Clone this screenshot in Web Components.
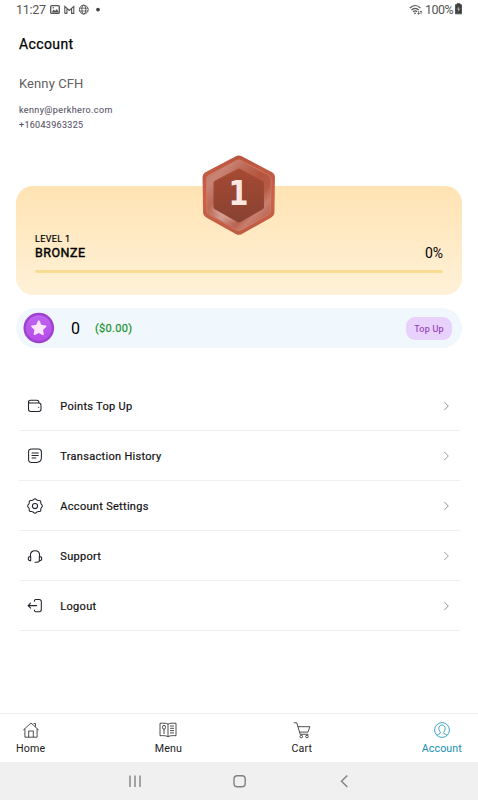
<!DOCTYPE html>
<html lang="en">
<head>
<meta charset="utf-8">
<title>Account</title>
<style>
html, body { margin: 0; height: 100%; background: #fff; }
body { font-family: Roboto, "Liberation Sans", sans-serif; color: #000; overflow: hidden; }
</style>
</head>
<body>
<account-screen></account-screen>
<script>
const define = (name, html) => customElements.define(name, class extends HTMLElement {
  constructor() {
    super();
    const t = document.createElement('template');
    t.innerHTML = html;
    this.attachShadow({ mode: 'open' }).append(t.content.cloneNode(true));
  }
});

define('status-bar', `<style>
:host { display: flex; height: 20px; align-items: center; padding: 0 16px; box-sizing: border-box; color: #555; font-size: 12.5px; line-height: 20px; }
svg { display: block; fill: none; stroke: currentColor; }
.gap { flex: 1; }
</style>
<span style="width:34px;letter-spacing:-.3px">11:27</span>
<svg width="56" height="12" viewBox="0 0 56 12" stroke-width="1">
<rect x=".7" y="1.6" width="8.6" height="7.8" rx="1" stroke-width="1.3"/><path d="M1.5 8.4 3.8 5.5 5.2 7 6.7 5 9 8.4Z" fill="currentColor" stroke="none"/><circle cx="3.3" cy="3.8" r=".8" fill="currentColor" stroke="none"/>
<path d="M14.8 9.4V2.4l4.5 4 4.5-4v7h-2.2V4.8M17 9.4V4.8M14.8 9.4H17" stroke-width="1.1"/>
<circle cx="33.8" cy="5.6" r="4.4"/><ellipse cx="33.8" cy="5.6" rx="2" ry="4.4"/><path d="M29.6 4.2h8.4M29.6 7h8.4" stroke-width=".8"/>
<circle cx="48" cy="5.6" r="1.9" fill="#444" stroke="none"/></svg>
<span class="gap"></span>
<svg width="16" height="12" viewBox="0 0 16 12" stroke-width="1.2"><path d="M.8 4.2C4 .6 8.6.6 11.4 4.2M2.5 6c2.4-2.3 5-2.3 7.2 0M4.1 7.7c1.4-1.2 2.7-1.2 4 0"/><circle cx="6" cy="9.3" r=".9" fill="currentColor" stroke="none"/><path d="M9.6 7v3.2M8.6 9l1 1.3 1-1.3M12 10.2V7M11 8.2l1-1.3 1 1.3" stroke-width=".8"/></svg>
<span style="width:30px;letter-spacing:-.5px">100%</span>
<svg width="7" height="12" viewBox="0 0 7 12" stroke="none" style="margin-top:-2px"><path d="M2 .7h3v1h1.5v9.1h-6V1.7H2Z" fill="#3c3c3c"/><path d="M4.2 3 1.4 6.6h1.7L2.7 9.4l2.8-3.9H3.8Z" fill="#fff"/></svg>`);

define('profile-header', `<style>
:host { display: block; padding: 14px 19px 0; height: 152px; }
h1, h2, p { margin: 0; }
h1 { font-size: 14px; line-height: 20px; font-weight: 400; -webkit-text-stroke: .25px; letter-spacing: .4px; }
h2 { font-size: 13px; line-height: 18px; font-weight: 400; color: #606060; margin-top: 21px; letter-spacing: .1px; }
p { font-size: 9px; line-height: 15px; color: #5a5568; font-weight: 400; -webkit-text-stroke: .1px; }
</style><h1>Account</h1><h2><slot name="name"></slot></h2><p style="margin-top:10px;letter-spacing:.38px"><slot name="email"></slot></p><p style="letter-spacing:.3px"><slot name="phone"></slot></p>`);

define('level-badge', `<style>:host { display: block; width: 76px; height: 82px; } svg { display: block; }</style>
<svg width="76" height="82" viewBox="0 0 76 82">
<defs><linearGradient id="o" gradientUnits="userSpaceOnUse" x1="0" y1="0" x2="0" y2="82"><stop stop-color="#b95640"/><stop offset=".55" stop-color="#cc6148"/><stop offset="1" stop-color="#bd5b43"/></linearGradient>
<linearGradient id="r" gradientUnits="userSpaceOnUse" x1="8" y1="14" x2="68" y2="70"><stop stop-color="#c27a6a"/><stop offset=".14" stop-color="#c98475"/><stop offset=".3" stop-color="#bd6b58"/><stop offset=".5" stop-color="#b4553e"/><stop offset=".68" stop-color="#b55a45"/><stop offset=".8" stop-color="#c87e6f"/><stop offset="1" stop-color="#b45a45"/></linearGradient>
<radialGradient id="g" gradientUnits="userSpaceOnUse" cx="20" cy="64" r="17"><stop stop-color="#d5a197"/><stop offset="1" stop-color="#d5a197" stop-opacity="0"/></radialGradient>
<linearGradient id="c" gradientUnits="userSpaceOnUse" x1="0" y1="15" x2="0" y2="68"><stop stop-color="#ad4c34"/><stop offset="1" stop-color="#8b4234"/></linearGradient>
<pattern id="p" width="3" height="3" patternUnits="userSpaceOnUse"><path d="M0 0 3 3M3 0 0 3" stroke="#783a26" stroke-width=".5" opacity=".45"/></pattern></defs>
<g stroke-linejoin="round"><path d="M37.8 7.8 67.7 23.5 67.2 58 37.8 74.5 8.3 58 7.8 23.5Z" fill="url(#o)" stroke="url(#o)" stroke-width="12.5"/>
<path d="M37.8 11 65 25.5 64.5 56.5 37.8 71.5 11 56.5 10.5 25.5Z" fill="#d37a65" stroke="#d37a65" stroke-width="11"/>
<path d="M37.8 11 65 25.5 64.5 56.5 37.8 71.5 11 56.5 10.5 25.5Z" fill="url(#r)" stroke="url(#r)" stroke-width="9.5"/>
<path d="M37.8 11 65 25.5 64.5 56.5 37.8 71.5 11 56.5 10.5 25.5Z" fill="url(#g)" stroke="url(#g)" stroke-width="9"/>
<path d="M38 17 60.5 29 60.5 53 38 66 15 53 15 29Z" fill="url(#c)" stroke="url(#c)" stroke-width="5"/>
<path d="M38 16 62 28.5 62 53.5 38 67.5 13.5 53.5 13.5 28.5Z" fill="url(#p)"/></g>
<text x="37.5" y="50.5" text-anchor="middle" font-family="DejaVu Sans, sans-serif" font-weight="700" font-size="34" fill="#ffe8e2" textLength="20" lengthAdjust="spacingAndGlyphs">1</text></svg>`);

define('level-card', `<style>
:host { display: grid; grid-template-columns: 1fr auto; grid-template-rows: 50px 12px 14px auto; box-sizing: border-box; height: 109px; margin: 0 16px; padding: 0 19px; background: linear-gradient(#ffe3b3, #fff1d8); border-radius: 17px; position: relative; }
level-badge { position: absolute; left: 185px; top: -32px; }
.level { grid-area: 2/1; font-size: 9px; line-height: 12px; -webkit-text-stroke: .2px; letter-spacing: .35px; margin-top: -3px; }
.tier { grid-area: 3/1; font-size: 12.5px; line-height: 14px; font-weight: 400; -webkit-text-stroke: .4px; letter-spacing: .5px; margin-top: -2px; }
.pct { grid-area: 3/2; font-size: 14px; line-height: 16px; margin-top: -3px; font-weight: 400; }
.bar { grid-area: 4/1/5/3; height: 3px; margin-top: 8px; border-radius: 2px; background: #fadb92; }
</style><level-badge></level-badge><span class="level"><slot name="level"></slot></span><span class="tier"><slot name="tier"></slot></span><span class="pct"><slot name="pct"></slot></span><div class="bar"></div>`);

define('points-row', `<style>
:host { display: flex; align-items: center; height: 40px; margin: 13px 16px 0; padding: 0 10px 0 7px; background: #f0f8fd; border-radius: 20px; }
svg { display: block; }
.pts { width: 24px; margin-left: 16px; font-size: 16px; line-height: 20px; padding-top: 1px; }
.cash { color: #15902a; font-size: 11px; -webkit-text-stroke: .2px; letter-spacing: .3px; flex: 1; padding-top: 1px; }
.btn { width: 46px; height: 23px; border-radius: 9px; background: #e8d1fb; color: #9139b8; font-size: 9px; letter-spacing: .25px; -webkit-text-stroke: .1px; line-height: 24px; text-align: center; }
</style><svg width="32" height="32" viewBox="0 0 32 32"><defs><linearGradient id="m" x1="0" y1="0" x2="0" y2="1"><stop stop-color="#bd65f0"/><stop offset="1" stop-color="#b64bea"/></linearGradient></defs><circle cx="15.8" cy="16" r="15.3" fill="#9f42cf"/><circle cx="15.8" cy="16" r="12.8" fill="url(#m)"/><path d="m15.8 9.2 2.1 4.3 4.8.7-3.5 3.4.8 4.8-4.2-2.3-4.3 2.3.8-4.8-3.4-3.4 4.7-.7Z" fill="#fce5fc" stroke="#fce5fc" stroke-width="1.6" stroke-linejoin="round"/></svg>
<span class="pts"><slot name="points"></slot></span><span class="cash"><slot name="cash"></slot></span><span class="btn">Top Up</span>`);

define('menu-row', `<style>
:host { display: flex; align-items: center; height: 50px; margin: 0 18px 0 19px; padding: 0 10px 0 8px; border-bottom: 1px solid #efefef; box-sizing: border-box; }
::slotted(svg) { display: block; width: 16px; height: 16px; fill: none; stroke: #20232b; stroke-width: 1.05; stroke-linecap: round; stroke-linejoin: round; }
.label { flex: 1; margin-left: 17.3px; font-size: 11px; line-height: 16px; -webkit-text-stroke: .2px; letter-spacing: .3px; padding-top: 2px; color: #111; }
</style><slot name="icon"></slot><span class="label"><slot></slot></span><svg width="7" height="10" viewBox="0 0 7 10" fill="none" stroke="#999" stroke-width="1"><path d="m1.3 1 4 4-4 4"/></svg>`);

define('tab-item', `<style>
:host { display: flex; flex-direction: column; align-items: center; color: #222; font-size: 10.7px; line-height: 14px; letter-spacing: .1px; }
:host([active]) { color: #168fb4; }
::slotted(svg) { display: block; width: 18px; height: 18px; margin: -1px 0 3px; fill: none; stroke: currentColor; stroke-width: .8; }
</style><slot name="icon"></slot><span><slot></slot></span>`);

define('tab-bar', `<style>
:host { display: flex; justify-content: space-between; box-sizing: border-box; height: 49px; padding: 8px 16px 0; border-top: 1px solid #eee; background: #fff; }
</style><slot></slot>`);

define('system-nav', `<style>
:host { display: grid; grid-template-columns: repeat(3, 105px); justify-content: center; align-items: center; justify-items: center; height: 38px; background: #f0f0f0; }
svg { display: block; width: 16px; height: 16px; fill: none; stroke: #808080; stroke-width: 1.4; }
</style><svg viewBox="0 0 16 16"><path d="M4 2.5v11.5M9 2.5v11.5M14 2.5v11.5"/></svg><svg viewBox="0 0 16 16"><rect x="3" y="2.7" width="11.2" height="11" rx="3.2"/></svg><svg viewBox="0 0 16 16"><path d="M11.3 2.5 5.5 8.2l5.8 5.7"/></svg>`);

define('account-screen', `<style>
:host { display: flex; flex-direction: column; width: 478px; height: 800px; background: #fff; }
.menu { margin-top: 33px; flex: 1; }
</style>
<status-bar></status-bar>
<profile-header><span slot="name">Kenny CFH</span><span slot="email">kenny@perkhero.com</span><span slot="phone">+16043963325</span></profile-header>
<level-card><span slot="level">LEVEL 1</span><span slot="tier">BRONZE</span><span slot="pct">0%</span></level-card>
<points-row><span slot="points">0</span><span slot="cash">($0.00)</span></points-row>
<div class="menu">
<menu-row><svg slot="icon" viewBox="0 0 16 16"><path d="M1.5 3.8v7.5c0 1.5.8 2.2 2.2 2.2h8.1c1.4 0 2.2-.7 2.2-2.2V7.2C14 5.8 13.2 5 11.8 5H3.2C2.1 5 1.5 4.6 1.5 3.8c0-1 .9-1.4 2-1.5l6.3-.1c1.4 0 2.1.7 2.1 2.1V5M11.6 9.2h.2"/></svg>Points Top Up</menu-row>
<menu-row><svg slot="icon" viewBox="0 0 16 16"><path d="M4.6 1h6.8c2.1 0 3 .9 3 3v5.5c0 3-2 4.9-4.9 4.9H4.6c-2.1 0-3-.9-3-3V4c0-2.1.9-3 3-3Z"/><path d="M5 5h6.300M5 7.5h6.300M5 10h3.800"/></svg>Transaction History</menu-row>
<menu-row><svg slot="icon" viewBox="0 0 16 16"><path d="M8 .7c1.2 0 1.5 1.3 2.5 1.6 1 .4 2.1-.3 2.9.5s.1 1.9.5 2.8c.4 1 1.5 1.3 1.5 2.4s-1.1 1.4-1.5 2.4.3 2-.5 2.8-1.9.1-2.900.5c-1 .3-1.300 1.600-2.500 1.600s-1.500-1.300-2.500-1.600c-1-.4-2.100.3-2.900-.5s-.1-1.800-.5-2.800S.6 9.100.6 8s1.100-1.400 1.500-2.400-.3-2 .5-2.800 1.900-.1 2.900-.5C6.500 2 6.800.7 8 .7Z"/><circle cx="8" cy="8" r="2.6"/></svg>Account Settings</menu-row>
<menu-row><svg slot="icon" viewBox="0 0 16 16"><path d="M3.4 9V7.1c0-5.8 9.2-5.8 9.2 0V9M3.7 8.4v4.4H3c-1.1 0-1.7-.8-1.7-2.2s.6-2.2 1.7-2.2ZM12.3 8.4v4.4h.7c1.1 0 1.7-.8 1.7-2.2s-.6-2.2-1.7-2.2ZM12.6 13c-.6 1-1.8 1.3-3.4 1.3M8 14.3h1.4"/></svg>Support</menu-row>
<menu-row><svg slot="icon" viewBox="0 0 16 16"><path d="M7.4 3.3V3c0-1 .5-1.5 1.5-1.5h3.3c1.4 0 2.1.7 2.1 2.1v8c0 1.4-.7 2.1-2.1 2.1H8.9c-1 0-1.5-.5-1.5-1.5v-.3M9.700 7.600H1.200M3.600 5.100 1.100 7.600l2.500 2.500"/></svg>Logout</menu-row>
</div>
<tab-bar>
<tab-item><svg slot="icon" viewBox="0 0 18 18"><path d="M1.3 9 9 2l7.700 7M2.900 7.800v8.400h12.200V7.800M6.700 16.200V10h4.600v6.200M11.500 2.500h2v3.200"/></svg>Home</tab-item>
<tab-item><svg slot="icon" viewBox="0 0 18 18"><path d="M9 3.200C7.800 2.200 5 2 1 2.300v12.400c3.800-.2 6.500 0 8 1 1.500-1 4.200-1.200 8-1V2.300c-4-.3-6.800-.1-8 .9Zm0 0v12.500M5 8.300v4.800M11 5h4M11 7.300h4M11 9.600h4M11 11.900h4"/><ellipse cx="5" cy="6.300" rx="1.500" ry="2"/></svg>Menu</tab-item>
<tab-item><svg slot="icon" viewBox="0 0 18 18"><path d="M.8 1.800h3l3.400 11.500h8.100M4.900 5.700h12L15 11.100H6.500"/><circle cx="8.300" cy="15.500" r="1.300"/><circle cx="14" cy="15.500" r="1.300"/></svg>Cart</tab-item>
<tab-item active><svg slot="icon" viewBox="0 0 18 18"><circle cx="9" cy="9" r="7.400"/><path d="M4 14.400c.4-1.400 3.500-1.300 3.500-2.600 0-.8-1.700-1.900-1.700-4.400 0-2 1.200-3.400 3.200-3.400s3.200 1.400 3.200 3.400c0 2.500-1.700 3.600-1.700 4.400 0 1.300 3.100 1.200 3.500 2.600"/></svg>Account</tab-item>
</tab-bar>
<system-nav></system-nav>`);
</script>
</body>
</html>
